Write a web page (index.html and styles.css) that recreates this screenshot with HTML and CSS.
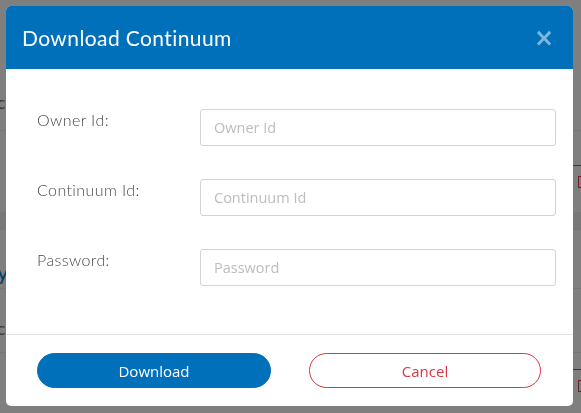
FILE: index.html
```html
<!DOCTYPE html>
<html>
<head>
<meta charset="utf-8">
<link rel="stylesheet" href="styles.css">
</head>
<body>
<div class="page">
  <div class="page-row r1"><span class="ghost">c</span></div>
  <div class="page-row r2"></div>
  <div class="page-row r3"><span class="ghost blue">y</span></div>
  <div class="page-row r4"><span class="ghost">c</span></div>
  <div class="red-line l1"></div>
  <div class="red-box b1"></div>
  <div class="red-line l2"></div>
  <div class="red-box b2"></div>
</div>
<div class="modal">
  <div class="modal-header">
    <h1 class="modal-title">Download Continuum</h1>
    <span class="close">&#215;</span>
  </div>
  <div class="modal-body">
    <label class="field-label">Owner Id:</label>
    <input class="field-input" type="text" placeholder="Owner Id">
    <label class="field-label">Continuum Id:</label>
    <input class="field-input" type="text" placeholder="Continuum Id">
    <label class="field-label">Password:</label>
    <input class="field-input" type="password" placeholder="Password">
  </div>
  <div class="modal-footer">
    <button class="btn btn-primary">Download</button>
    <button class="btn btn-cancel">Cancel</button>
  </div>
</div>
</body>
</html>
```
FILE: styles.css
```css
html, body {
  margin: 0;
  padding: 0;
  width: 581px;
  height: 413px;
  overflow: hidden;
  background: #7f7f7f;
}

.page {
  position: relative;
  width: 581px;
  height: 413px;
}

.page-row {
  position: absolute;
  left: 0;
  width: 581px;
  border-bottom: 1px solid #767676;
  font-family: "Lato", sans-serif;
  font-size: 17px;
  color: #333;
}
.r1 { top: 88px; height: 42px; }
.r2 { top: 212px; height: 17px; background: #787878; border-bottom: 1px solid #757575; }
.r3 { top: 258px; height: 30px; }
.r4 { top: 314px; height: 38px; }
.ghost { position: absolute; left: -3px; top: 4px; color: #3a3a3a; }
.r3 .ghost { color: #003d66; font-size: 22px; top: 0; }

.red-line {
  position: absolute;
  right: 0;
  width: 15px;
  height: 1px;
  background: #7a1a22;
}
.l1 { top: 165px; }
.l2 { top: 369px; }
.red-box {
  position: absolute;
  left: 578px;
  width: 8px;
  height: 10px;
  border: 1px solid #6e2029;
}
.b1 { top: 176px; }
.b2 { top: 380px; }

.modal {
  position: fixed;
  top: 6px;
  left: 6px;
  width: 567px;
  height: 400px;
  background: #fff;
  border-radius: 5px;
  overflow: hidden;
  display: flex;
  flex-direction: column;
}

.modal-header {
  height: 63px;
  background: #0070ba;
  display: flex;
  align-items: center;
  justify-content: space-between;
  padding: 0 19px 0 16px;
  flex: none;
}

.modal-title {
  margin: 0;
  font-family: "Lato", sans-serif;
  font-weight: 400;
  font-size: 21px;
  color: #fff;
  letter-spacing: 0.4px;
}

.close {
  font-family: "DejaVu Sans", sans-serif;
  font-weight: 700;
  font-size: 24px;
  line-height: 1;
  color: #80b7dd;
  margin-top: 1px;
}

.modal-body {
  display: grid;
  grid-template-columns: 163px 356px;
  row-gap: 33px;
  padding: 40px 17px 48px 31px;
  border-bottom: 1px solid #e2e2e2;
}

.field-label {
  font-family: "Lato", sans-serif;
  font-weight: 300;
  font-size: 16px;
  letter-spacing: 0.4px;
  color: #4a4a4a;
  line-height: 22px;
}

.field-input {
  box-sizing: border-box;
  width: 356px;
  height: 37px;
  margin: 0;
  border: 1px solid #ced4da;
  border-radius: 3px;
  padding: 0 13px;
  font-family: "Open Sans", sans-serif;
  font-size: 14.5px;
  color: #333;
  outline: none;
}
.field-input::placeholder {
  color: #bdbdbd;
}

.modal-footer {
  display: grid;
  grid-template-columns: 234px 232px;
  column-gap: 38px;
  padding: 18px 32px 0 31px;
}

.btn {
  height: 35px;
  border-radius: 18px;
  font-family: "Open Sans", sans-serif;
  font-size: 15px;
  cursor: pointer;
  padding: 0;
}

.btn-primary {
  background: #0070ba;
  border: 1px solid #0070ba;
  color: #fff;
}

.btn-cancel {
  background: #fff;
  border: 1px solid #dc3545;
  color: #dc3545;
}
```
